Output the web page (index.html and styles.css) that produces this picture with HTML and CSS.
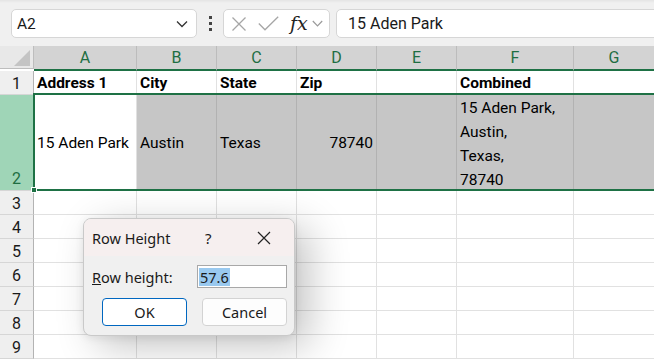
FILE: index.html
```html
<!DOCTYPE html>
<html>
<head>
<meta charset="utf-8">
<link rel="stylesheet" href="styles.css">
</head>
<body>
<div class="app">
  <div class="toolbar">
    <div class="namebox">
      <span class="nb-text">A2</span>
      <svg class="nb-chev" width="12" height="8" viewBox="0 0 12 8"><path d="M1 1.5 L6 6.5 L11 1.5" fill="none" stroke="#333" stroke-width="1.3"/></svg>
    </div>
    <div class="dots"><i></i><i></i><i></i></div>
    <div class="fxbox">
      <svg class="ic-x" width="16" height="16" viewBox="0 0 16 16"><path d="M1.5 1.5 L14.5 14.5 M14.5 1.5 L1.5 14.5" stroke="#a6a6a6" stroke-width="1.3" fill="none"/></svg>
      <svg class="ic-check" width="21" height="15" viewBox="0 0 21 15"><path d="M0.8 7.5 L7 13.8 L20.2 0.8" stroke="#a6a6a6" stroke-width="1.3" fill="none"/></svg>
      <span class="fx">fx</span>
      <svg class="fx-chev" width="11" height="7" viewBox="0 0 11 7"><path d="M0.8 1 L5.5 5.8 L10.2 1" fill="none" stroke="#9a9a9a" stroke-width="1.2"/></svg>
    </div>
    <div class="formula">15 Aden Park</div>
  </div>

  <div class="sheet">
    <div class="grid">
      <div class="corner"><span class="tri"></span></div>
      <div class="colh">A</div>
      <div class="colh">B</div>
      <div class="colh">C</div>
      <div class="colh">D</div>
      <div class="colh">E</div>
      <div class="colh">F</div>
      <div class="colh">G</div>

      <div class="rowh r1">1</div>
      <div class="cell hd">Address 1</div>
      <div class="cell hd">City</div>
      <div class="cell hd">State</div>
      <div class="cell hd">Zip</div>
      <div class="cell hd"></div>
      <div class="cell hd">Combined</div>
      <div class="cell hd"></div>

      <div class="rowh sel-row">2</div>
      <div class="cell r2 active">15 Aden Park</div>
      <div class="cell r2 shade">Austin</div>
      <div class="cell r2 shade">Texas</div>
      <div class="cell r2 shade num">78740</div>
      <div class="cell r2 shade"></div>
      <div class="cell r2 shade wrap">15 Aden Park,<br>Austin,<br>Texas,<br>78740</div>
      <div class="cell r2 shade"></div>

      <div class="rowh">3</div><div class="cell"></div><div class="cell"></div><div class="cell"></div><div class="cell"></div><div class="cell"></div><div class="cell"></div><div class="cell"></div>
      <div class="rowh">4</div><div class="cell"></div><div class="cell"></div><div class="cell"></div><div class="cell"></div><div class="cell"></div><div class="cell"></div><div class="cell"></div>
      <div class="rowh">5</div><div class="cell"></div><div class="cell"></div><div class="cell"></div><div class="cell"></div><div class="cell"></div><div class="cell"></div><div class="cell"></div>
      <div class="rowh">6</div><div class="cell"></div><div class="cell"></div><div class="cell"></div><div class="cell"></div><div class="cell"></div><div class="cell"></div><div class="cell"></div>
      <div class="rowh">7</div><div class="cell"></div><div class="cell"></div><div class="cell"></div><div class="cell"></div><div class="cell"></div><div class="cell"></div><div class="cell"></div>
      <div class="rowh">8</div><div class="cell"></div><div class="cell"></div><div class="cell"></div><div class="cell"></div><div class="cell"></div><div class="cell"></div><div class="cell"></div>
      <div class="rowh">9</div><div class="cell"></div><div class="cell"></div><div class="cell"></div><div class="cell"></div><div class="cell"></div><div class="cell"></div><div class="cell"></div>
    </div>

    <div class="selection"></div>
    <div class="handle"></div>

    <div class="dialog">
      <div class="dlg-title">
        <span class="dlg-name">Row Height</span>
        <span class="dlg-help">?</span>
        <svg class="dlg-close" width="14" height="14" viewBox="0 0 14 14"><path d="M1 1 L13 13 M13 1 L1 13" stroke="#222" stroke-width="1.2" fill="none"/></svg>
      </div>
      <div class="dlg-body">
        <div class="dlg-row">
          <label class="dlg-label"><u>R</u>ow height:</label>
          <div class="dlg-input"><span class="selected-text">57.6</span></div>
        </div>
        <div class="dlg-buttons">
          <button class="btn primary">OK</button>
          <button class="btn">Cancel</button>
        </div>
      </div>
    </div>
  </div>
</div>
</body>
</html>
```

FILE: styles.css
```css
* { box-sizing: border-box; }
html, body { margin: 0; padding: 0; }
body {
  width: 654px;
  height: 359px;
  overflow: hidden;
  background: #ffffff;
  font-family: "Roboto", "Liberation Sans", sans-serif;
}
.app { width: 654px; height: 359px; overflow: hidden; }

/* toolbar */
.toolbar {
  height: 46px;
  background: linear-gradient(#e4e4e4 0px, #f0f0f0 3px, #f0f0f0 100%);
  display: flex;
  align-items: flex-start;
  padding: 9px 0 0 11px;
  overflow: hidden;
}
.toolbar > * { flex: none; }
.namebox {
  width: 186px;
  height: 29px;
  background: #fff;
  border: 1px solid #d6d6d6;
  border-radius: 5px;
  display: flex;
  align-items: center;
  justify-content: space-between;
  padding: 0 8px 0 5px;
}
.nb-text {
  font-family: "Roboto", "Liberation Sans", sans-serif;
  font-size: 15.5px;
  color: #1a1a1a;
}
.dots {
  width: 26px;
  height: 29px;
  display: flex;
  flex-direction: column;
  align-items: center;
  justify-content: center;
  gap: 3px;
}
.dots i {
  display: block;
  width: 3px;
  height: 3px;
  background: #444;
}
.fxbox {
  width: 107px;
  height: 29px;
  background: #fff;
  border: 1px solid #d6d6d6;
  border-radius: 5px;
  display: flex;
  align-items: center;
  padding-left: 7px;
}
.ic-x { margin-right: 11px; }
.ic-check { margin-right: 11px; margin-top: -1px; }
.fx {
  font-family: "DejaVu Serif", "Liberation Serif", serif;
  font-style: italic;
  font-size: 19px;
  color: #222;
  margin-right: 4px;
  margin-top: -2px;
}
.formula {
  width: 330px;
  height: 29px;
  margin-left: 6px;
  background: #fff;
  border: 1px solid #d6d6d6;
  border-radius: 5px;
  padding-left: 11px;
  display: flex;
  align-items: center;
  font-family: "Roboto", "Liberation Sans", sans-serif;
  font-size: 16px;
  color: #1a1a1a;
}

/* sheet */
.sheet {
  position: relative;
  height: 313px;
}
.grid {
  display: grid;
  grid-template-columns: 34px 103px 80px 80px 80px 80px 117px 81px;
  grid-template-rows: 25px 24px 96px repeat(7, 24px);
  font-size: 15.5px;
  color: #000;
}
.corner {
  background: #e8e8e8;
  border-right: 1px solid #bdbdbd;
  border-bottom: 1px solid #bdbdbd;
  position: relative;
  height: 23px;
}
.tri {
  position: absolute;
  right: 3px;
  bottom: 2px;
  width: 0;
  height: 0;
  border-left: 16px solid transparent;
  border-bottom: 16px solid #c4c4c4;
}
.colh {
  background: #d3d3d3;
  border-right: 1px solid #bcbcbc;
  border-bottom: 2px solid #1e7145;
  color: #1e6e42;
  display: flex;
  align-items: center;
  justify-content: center;
  font-size: 16px;
  padding-bottom: 1px;
}
.rowh {
  background: #efefef;
  border-right: 1px solid #b3b3b3;
  border-bottom: 1px solid #d6d6d6;
  display: flex;
  align-items: center;
  justify-content: center;
  font-size: 16px;
  color: #1a1a1a;
  padding-top: 1px;
}
.rowh.sel-row {
  background: #9fd5b7;
  color: #1e6e42;
  align-items: flex-end;
  padding-bottom: 2px;
}
.cell {
  border-right: 1px solid #e1e1e1;
  border-bottom: 1px solid #e1e1e1;
  display: flex;
  align-items: center;
  padding: 1px 3px 0 3px;
  white-space: nowrap;
  overflow: hidden;
}
.cell.hd {
  font-weight: bold;
  align-items: flex-end;
  padding-bottom: 2px;
}
.cell.shade {
  background: #c6c6c6;
  border-right-color: #b2b2b2;
}
.cell.num { justify-content: flex-end; }
.cell.wrap {
  align-items: flex-start;
  line-height: 24px;
  padding-top: 1px;
  white-space: normal;
}

.selection {
  position: absolute;
  left: 33px;
  top: 47px;
  width: 640px;
  height: 98px;
  border: 2px solid #1e7145;
  pointer-events: none;
}
.handle {
  position: absolute;
  left: 31px;
  top: 141px;
  width: 6px;
  height: 6px;
  background: #1e7145;
  border: 1px solid #fff;
}

/* dialog */
.dialog {
  position: absolute;
  left: 83px;
  top: 172px;
  width: 212px;
  height: 118px;
  border: 1px solid #c9c9c9;
  border-radius: 8px;
  background: #f0f0f0;
  box-shadow: 14px 10px 40px rgba(0,0,0,0.24), 0 2px 8px rgba(0,0,0,0.08);
  overflow: hidden;
  font-family: "Noto Sans", "Open Sans", sans-serif;
  font-size: 14.5px;
  color: #1a1a1a;
}
.dlg-title {
  height: 37px;
  background: #f6efef;
  display: flex;
  align-items: center;
  padding-left: 8px;
}
.dlg-name { width: 113px; }
.dlg-help { width: 52px; font-size: 15px; }
.dlg-body {
  padding: 9px 7px 0 8px;
}
.dlg-row {
  display: flex;
  align-items: center;
  justify-content: space-between;
  height: 23px;
}
.dlg-label { padding-top: 1px; }
.dlg-input {
  width: 90px;
  height: 23px;
  background: #fff;
  border: 1px solid #a8a8a8;
  padding: 2px 0 0 1px;
  display: flex;
  align-items: flex-start;
}
.selected-text {
  background: #99c9ef;
  height: 18px;
  line-height: 18px;
  padding: 0 1px 0 1px;
}
.dlg-buttons {
  display: flex;
  justify-content: flex-end;
  gap: 15px;
  margin-top: 10px;
}
.btn {
  width: 85px;
  height: 28px;
  font-family: "Noto Sans", "Open Sans", sans-serif;
  font-size: 14.5px;
  color: #1a1a1a;
  background: #fdfdfd;
  border: 1px solid #d3d3d3;
  border-radius: 4px;
  padding: 0;
}
.btn.primary {
  background: #fff;
  border: 1px solid #0067c0;
}
```
